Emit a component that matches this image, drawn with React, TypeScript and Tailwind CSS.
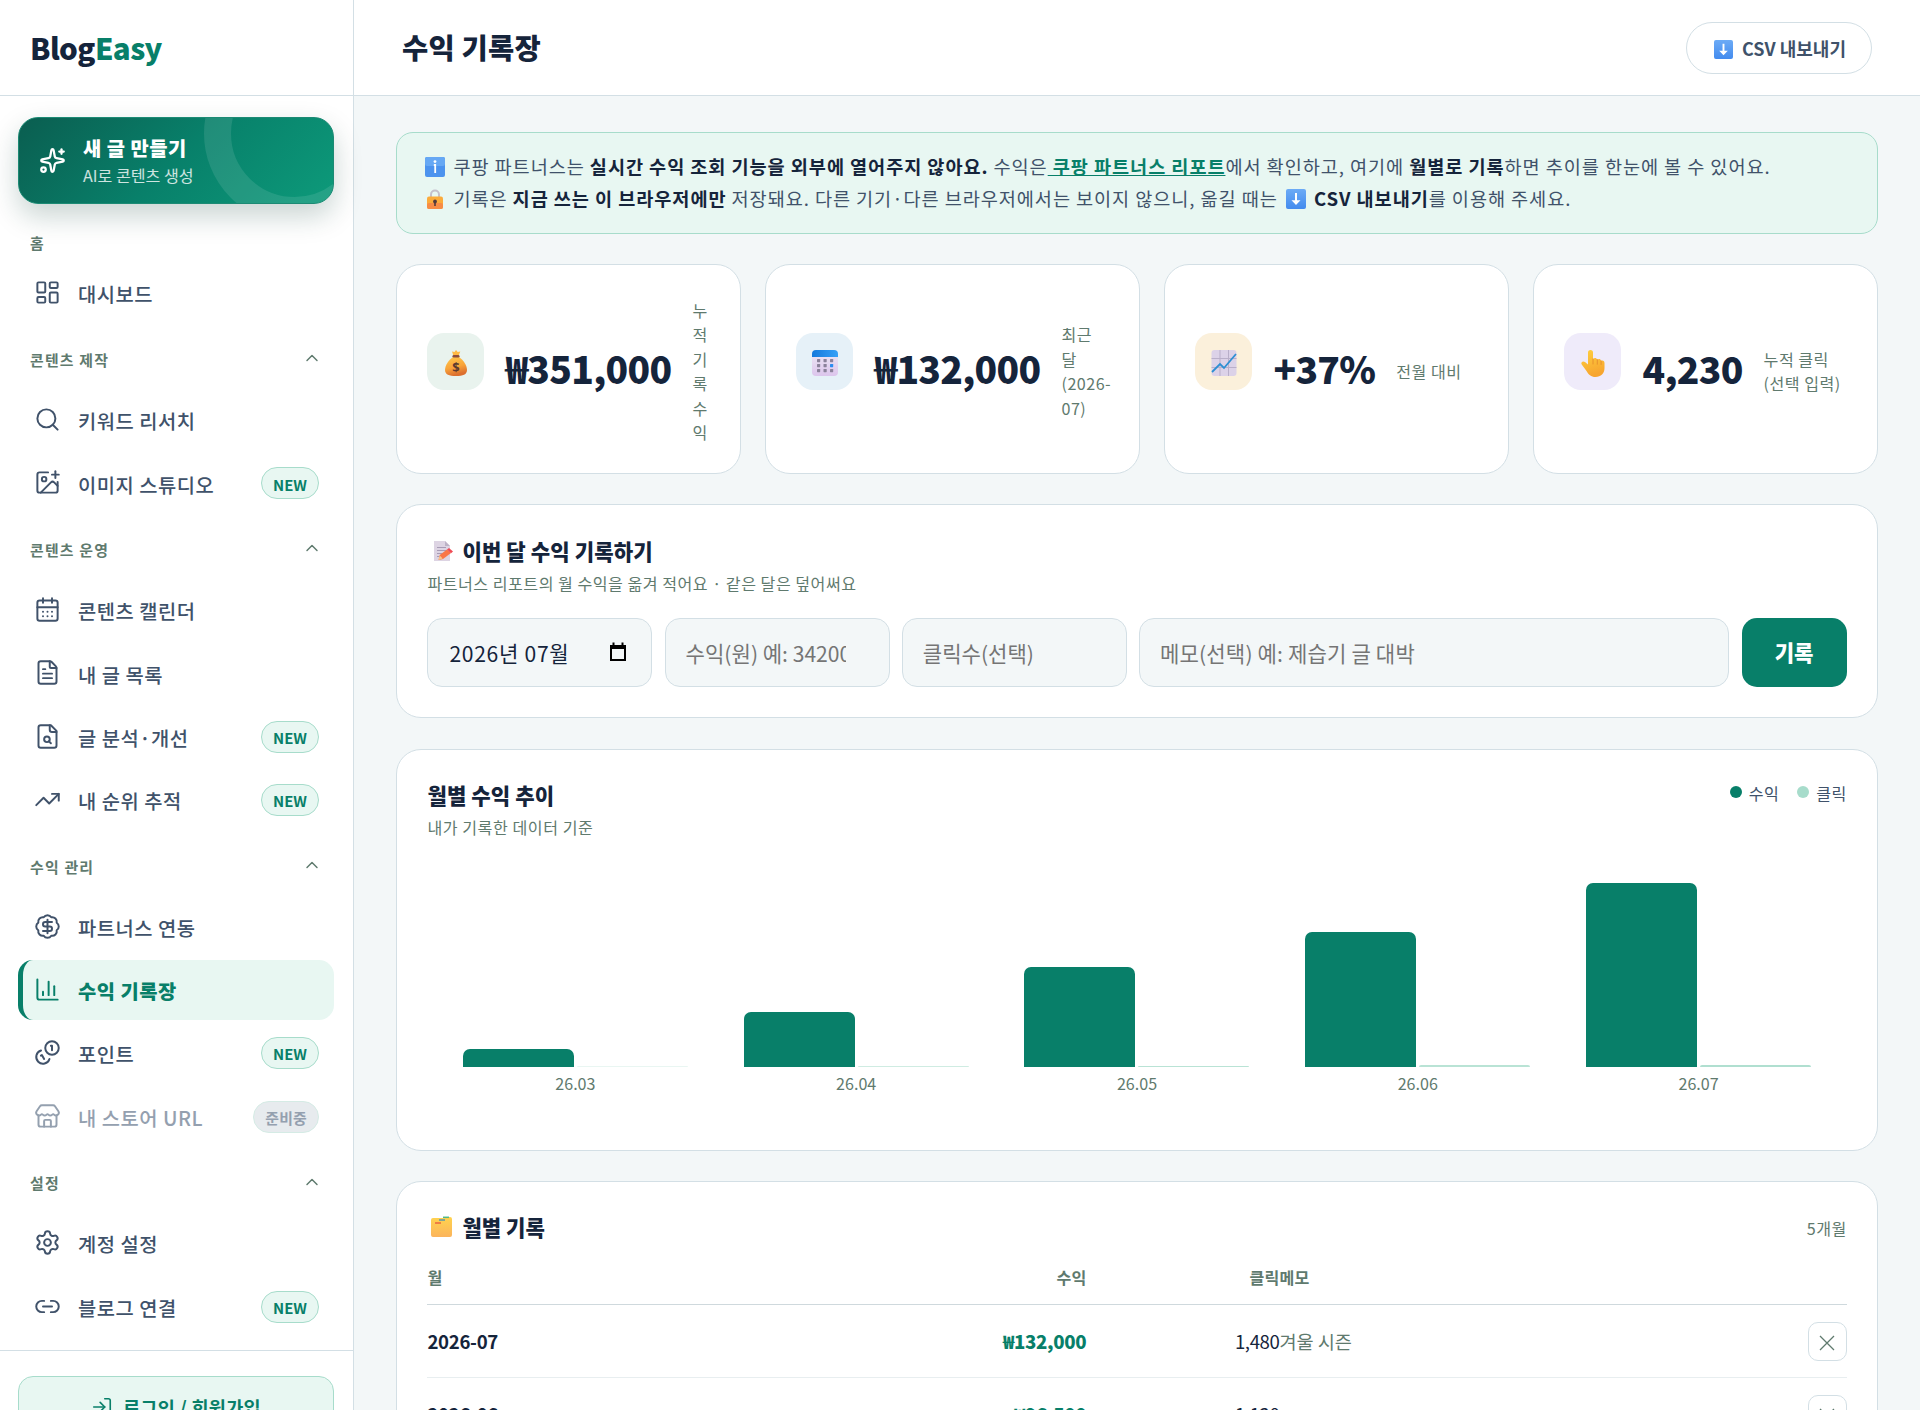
import type { ReactNode } from "react";
import {
  BadgeDollarSign,
  CalendarDays,
  ChartColumn,
  ChevronUp,
  FileText,
  ImagePlus,
  LayoutDashboard,
  Link2,
  LogIn,
  Search,
  Settings,
  Sparkles,
  Store,
  TrendingUp,
  type LucideIcon,
} from "lucide-react";

type IconType = LucideIcon | (() => ReactNode);

type NavItem = {
  label: string;
  icon: IconType;
  badge?: string;
  active?: boolean;
  disabled?: boolean;
};

const svgProps = {
  viewBox: "0 0 24 24",
  fill: "none",
  stroke: "currentColor",
  strokeWidth: 1.75,
  strokeLinecap: "round" as const,
  strokeLinejoin: "round" as const,
};

function FileSearchIcon() {
  return (
    <svg {...svgProps} className="size-[27px] shrink-0">
      <path d="M15 2H6a2 2 0 0 0-2 2v16a2 2 0 0 0 2 2h12a2 2 0 0 0 2-2V7Z" />
      <path d="M14 2v4a2 2 0 0 0 2 2h4" />
      <circle cx="11.5" cy="14.5" r="2.5" />
      <path d="M13.3 16.3 15 18" />
    </svg>
  );
}

function CoinsIcon() {
  return (
    <svg {...svgProps} className="size-[27px] shrink-0">
      <path d="M13.744 17.736a6 6 0 1 1-7.48-7.48" />
      <path d="M15 6h1v4" />
      <path d="m6.134 14.768.866-.5 2 3.464" />
      <circle cx="16" cy="8" r="6" />
    </svg>
  );
}

const sections: { title: string; items: NavItem[] }[] = [
  {
    title: "콘텐츠 제작",
    items: [
      { label: "키워드 리서치", icon: Search },
      { label: "이미지 스튜디오", icon: ImagePlus, badge: "NEW" },
    ],
  },
  {
    title: "콘텐츠 운영",
    items: [
      { label: "콘텐츠 캘린더", icon: CalendarDays },
      { label: "내 글 목록", icon: FileText },
      { label: "글 분석·개선", icon: FileSearchIcon, badge: "NEW" },
      { label: "내 순위 추적", icon: TrendingUp, badge: "NEW" },
    ],
  },
  {
    title: "수익 관리",
    items: [
      { label: "파트너스 연동", icon: BadgeDollarSign },
      { label: "수익 기록장", icon: ChartColumn, active: true },
      { label: "포인트", icon: CoinsIcon, badge: "NEW" },
      { label: "내 스토어 URL", icon: Store, badge: "준비중", disabled: true },
    ],
  },
  {
    title: "설정",
    items: [
      { label: "계정 설정", icon: Settings },
      { label: "블로그 연결", icon: Link2, badge: "NEW" },
    ],
  },
];

function NavRow({ label, icon: Icon, badge, active, disabled }: NavItem) {
  const base = "mb-[3.3px] flex h-[60px] items-center gap-[17px] rounded-[15px] border-l-[5px] pr-[15px] pl-[11px]";
  const tone = active
    ? "border-[#087f69] bg-[#e8f7f2] font-extrabold text-[#087f69]"
    : disabled
      ? "border-transparent text-[#94a0af] font-medium"
      : "border-transparent text-[#40526a] font-medium";
  return (
    <div className={`${base} ${tone}`}>
      <Icon className="size-[27px] shrink-0" strokeWidth={1.75} />
      <span className="grow pt-[3px] text-[19.84px] leading-none tracking-[0.5px]">{label}</span>
      {badge && !disabled && (
        <span className="mt-px flex h-8 items-center rounded-full border border-[#a7dccb] bg-[#e8f7f2] px-[11px] pt-[3px] text-[14.9px] leading-none font-bold text-[#087f69]">
          {badge}
        </span>
      )}
      {badge && disabled && (
        <span className="mt-px flex h-8 items-center rounded-full border border-[#d5ebe5] bg-[#e7ebee] px-[11px] pt-[3px] text-[14.9px] leading-none font-bold tracking-[0.2px] text-[#94a0af]">
          {badge}
        </span>
      )}
    </div>
  );
}

function Sidebar() {
  return (
    <aside className="flex w-[354px] shrink-0 flex-col border-r border-[#d3dfe5] bg-white">
      <div className="flex h-24 shrink-0 items-center border-b border-[#d3dfe5] pl-[30px] text-[29.5px] font-extrabold tracking-[-0.6px] text-[#15243b]">
        Blog<span className="text-[#087f69]">Easy</span>
      </div>
      <div className="flex h-[1254px] shrink-0 flex-col pt-[21px] pr-[19px] pl-[18px]">
        <div className="relative flex h-[87px] w-[316px] shrink-0 items-center rounded-[20px] border border-[#1c8a74] bg-linear-135 from-[#0a5e50] via-[#08806a] to-[#0d9a7a] pl-5 text-white shadow-[0_12px_28px_rgba(10,60,50,0.22)]">
          <div className="absolute inset-0 overflow-hidden rounded-[19px]">
            <div className="absolute -top-[75px] left-[185px] size-[181px] rounded-full border-[27px] border-white/10" />
          </div>
          <Sparkles className="size-[27px]" strokeWidth={2} />
          <div className="ml-[17px] flex flex-col">
            <span className="pt-px text-[19.84px] leading-7 font-extrabold tracking-[0.5px]">새 글 만들기</span>
            <span className="-mt-px text-[16.1px] leading-7 text-white/80">AI로 콘텐츠 생성</span>
          </div>
        </div>
        <div className="mt-[29px] h-[29px] pl-3 text-[14.9px] leading-5 font-bold tracking-[1.2px] text-[#5f7a6e]">홈</div>
        <NavRow label="대시보드" icon={LayoutDashboard} />
        <div className="pt-[1px]">
          {sections.map((s) => (
            <div key={s.title}>
              <div className="flex h-[63.4px] items-center justify-between pr-3 pl-3 text-[14.9px] leading-none font-bold tracking-[1.2px] text-[#5f7a6e]">
                <span className="pt-[5px]">{s.title}</span>
                <ChevronUp className="mt-px size-5" strokeWidth={1.75} />
              </div>
              {s.items.map((item) => (
                <NavRow key={item.label} {...item} />
              ))}
            </div>
          ))}
        </div>
      </div>
      <div className="border-t border-[#d3dfe5] px-[18px] pt-[25px]">
        <div className="flex h-[62px] w-[316px] items-center justify-center gap-[10px] rounded-[15px] border border-[#a7dccb] bg-[#e8f7f2] text-[18.6px] font-bold tracking-[0.25px] text-[#087f69]">
          <LogIn className="size-[22px]" strokeWidth={1.75} />
          로그인 / 회원가입
        </div>
      </div>
    </aside>
  );
}

function InfoEmoji({ className }: { className: string }) {
  return (
    <svg viewBox="0 0 20 20" className={className}>
      <rect width="20" height="20" rx="2" fill="#4c93ee" />
      <rect width="20" height="9" rx="2" fill="#66a8f4" />
      <circle cx="10" cy="4.6" r="1.4" fill="#fff" />
      <path d="M8.8 8H10.200V16" fill="none" stroke="#fff" strokeWidth="1.8" />
    </svg>
  );
}

function DownEmoji({ className }: { className: string }) {
  return (
    <svg viewBox="0 0 20 20" className={className}>
      <defs>
        <linearGradient id="down" x1="0" y1="0" x2="0" y2="1">
          <stop offset="0" stopColor="#6cabf6" />
          <stop offset="1" stopColor="#438bee" />
        </linearGradient>
      </defs>
      <rect width="20" height="20" rx="2" fill="url(#down)" />
      <path d="M9 4h2v7.200h3.500L10 16l-4.500-4.800H9z" fill="#fff" />
    </svg>
  );
}

function LockEmoji() {
  return (
    <svg viewBox="0 0 20 20" className="inline-block size-5 align-[-3px]">
      <path d="M6 9V5.500a4 4 0 0 1 8 0V9" fill="none" stroke="#c5c0cc" strokeWidth="2" />
      <rect x="2" y="7.500" width="16" height="12.500" rx="2" fill="#fbab3b" />
      <rect x="2" y="14" width="16" height="6" rx="2" fill="#f78c45" />
      <circle cx="10" cy="12.500" r="1.900" fill="#523a3b" />
      <path d="M9.200 13h1.600v4H9.200z" fill="#523a3b" />
    </svg>
  );
}

function MoneyBag() {
  return (
    <svg viewBox="0 0 26 28" className="h-7 w-[26px]">
      <defs>
        <linearGradient id="bag" x1="0" y1="0" x2="0.300" y2="1">
          <stop offset="0" stopColor="#ffc94b" />
          <stop offset="0.600" stopColor="#f9a43a" />
          <stop offset="1" stopColor="#dc6f2e" />
        </linearGradient>
      </defs>
      <path d="M9 2.500 11.500 3 13 1l1.700 2 2.600-.5L15.500 7h-5z" fill="#ffb944" />
      <path d="M10 8C6 11 2 16 2 21c0 4.500 4 6 11 6s11-1.500 11-6c0-5-4-10-8-13z" fill="url(#bag)" />
      <rect x="9.500" y="6" width="7" height="2.600" rx="1.300" fill="#8b4b3c" />
      <text x="13" y="23" textAnchor="middle" fontSize="13" fontWeight="700" fill="#5b3a30" fontFamily="Noto Sans">
        $
      </text>
    </svg>
  );
}

function CalendarEmoji() {
  return (
    <svg viewBox="0 0 26 26" className="size-[26px]">
      <defs>
        <linearGradient id="calTop" x1="0" y1="0" x2="1" y2="0">
          <stop offset="0" stopColor="#1479dc" />
          <stop offset="1" stopColor="#36a0f7" />
        </linearGradient>
        <linearGradient id="calBody" x1="0" y1="0" x2="0" y2="1">
          <stop offset="0" stopColor="#eeeaf5" />
          <stop offset="1" stopColor="#dcc5ec" />
        </linearGradient>
      </defs>
      <rect width="26" height="26" rx="4" fill="url(#calBody)" />
      <path d="M0 7V4a4 4 0 0 1 4-4h18a4 4 0 0 1 4 4v3z" fill="url(#calTop)" />
      {[9, 14, 19].map((y) =>
        [5, 11.5, 18].map((x) => (
          <rect key={`${x}-${y}`} x={x} y={y} width="3.200" height="3.200" rx="0.600" fill={x === 18 && y === 14 ? "#2b8cf0" : "#8b829b"} />
        )),
      )}
    </svg>
  );
}

function ChartEmoji() {
  return (
    <svg viewBox="0 0 26 26" className="size-[26px]">
      <rect x="0.500" width="25" height="26" rx="3" fill="#dcd2e8" />
      <path d="M0.500 8.500h25M0.500 17.500h25M9 0v26M17.500 0v26" stroke="#b9afc9" strokeWidth="1" />
      <path d="m1 22 8-8 4 4L25 4" fill="none" stroke="#2d8fd3" strokeWidth="1.800" />
    </svg>
  );
}

function HandEmoji() {
  return (
    <svg viewBox="0 0 26 27" className="h-[27px] w-[26px]">
      <defs>
        <linearGradient id="hand" x1="0" y1="0" x2="0.300" y2="1">
          <stop offset="0" stopColor="#ffd03f" />
          <stop offset="1" stopColor="#f7a52f" />
        </linearGradient>
      </defs>
      <path
        d="M8 2.500a2.500 2.500 0 0 1 5 0V9c1.500-1.500 3.500-1.200 4.300.6 1.600-1.200 3.300-.7 3.800 1.200 2-.8 3.400.3 3.400 2.400V18c0 5.500-3.500 9-9 9-4.500 0-7-2.500-9-6l-4.800-6.500C.3 12.200 3 10.500 5 12l3 2.500z"
        fill="url(#hand)"
      />
      <path d="M13 9v5M17.300 9.600v4.600M21.100 11v3.500" stroke="#e58d2c" strokeWidth="0.900" strokeLinecap="round" />
    </svg>
  );
}

function MemoEmoji() {
  return (
    <svg viewBox="0 0 22 22" className="size-[22px]">
      <path d="M2 1h11l5 5v15H2z" fill="#ddd4e3" />
      <path d="M13 1l5 5h-5z" fill="#bcb2c6" />
      <path d="M5 7.500h9M5 10.500h9M5 13.500h6M5 16.500h3" stroke="#a79bb5" strokeWidth="1" />
      <path d="m6.500 20 1.200-5L15 9.500l4 3.500-8 6z" fill="#f97648" />
      <path d="m15 9.500 2-1.500 4 3.600-2 1.600z" fill="#ef4a55" />
      <path d="m6.500 20 1.200-4.500 3 3z" fill="#f8c58c" />
    </svg>
  );
}

function FolderEmoji() {
  return (
    <svg viewBox="0 0 22 22" className="size-[22px]">
      <defs>
        <linearGradient id="folder" x1="0" y1="0" x2="0" y2="1">
          <stop offset="0" stopColor="#ffd34e" />
          <stop offset="1" stopColor="#fbb45c" />
        </linearGradient>
      </defs>
      <path d="M0 4a2 2 0 0 1 2-2h10l2-1h5a2 2 0 0 1 2 2v16a2 2 0 0 1-2 2H2a2 2 0 0 1-2-2z" fill="url(#folder)" />
      <path d="M12 1.300h6" stroke="#52b788" strokeWidth="1.500" />
      <path d="M8 4h6" stroke="#3d8fb8" strokeWidth="1.300" />
      <path d="M4 7h6" stroke="#e7553c" strokeWidth="1.300" />
    </svg>
  );
}

const stats = [
  { value: "₩351,000", label: "누적 기록 수익", icon: <MoneyBag />, box: "bg-[#e9f3ee]", text: "w-[17px] break-all" },
  { value: "₩132,000", label: "최근 달 (2026-07)", icon: <CalendarEmoji />, box: "bg-[#e6f1f8]", text: "w-[49px]" },
  { value: "+37%", label: "전월 대비", icon: <ChartEmoji />, box: "bg-[#fbf0db]", text: "" },
  { value: "4,230", label: "누적 클릭 (선택 입력)", icon: <HandEmoji />, box: "bg-[#efebfa]", text: "w-[82px]" },
];

// revenue / click bar heights in px
const months = [
  { label: "26.03", revenue: 18, clicks: 1, fade: 0.25 },
  { label: "26.04", revenue: 55, clicks: 1, fade: 0.55 },
  { label: "26.05", revenue: 99.6, clicks: 1.4, fade: 0.8 },
  { label: "26.06", revenue: 134.6, clicks: 1.6, fade: 0.8 },
  { label: "26.07", revenue: 184, clicks: 2.1, fade: 0.9 },
];

const records = [
  { month: "2026-07", revenue: "₩132,000", clicks: "1,480", memo: "겨울 시즌" },
  { month: "2026-06", revenue: "₩96,500", clicks: "1,120", memo: "" },
];

const card = "rounded-[25px] border border-[#d3dfe5] bg-white";
const field =
  "flex h-[69px] items-center overflow-hidden rounded-[15px] border border-[#d3dfe5] bg-[#f3f7f8] px-5 pt-[2px] text-[21.08px] whitespace-nowrap text-[#757575]";

export default function App() {
  return (
    <div className="flex h-[1410px] w-[1920px] overflow-hidden bg-[#f3f7f8] font-['Noto_Sans_CJK_KR','Noto_Sans',sans-serif] text-[#15243b]">
      <Sidebar />
      <div className="flex min-w-0 grow flex-col">
        <header className="flex h-24 shrink-0 items-center justify-between border-b border-[#d3dfe5] bg-white px-12">
          <h1 className="text-[28.5px] font-extrabold tracking-[0.2px]">수익 기록장</h1>
          <button className="flex h-[52px] w-[186px] items-center justify-center gap-[9px] rounded-full border border-[#d3dfe5] pt-[2px] pl-[2px] text-[18px] font-bold text-[#40526a]">
            <DownEmoji className="mt-px size-[19px]" />
            CSV 내보내기
          </button>
        </header>

        <main className="flex flex-col px-[42.4px] pt-9">
          <div className="h-[102px] rounded-[17px] border border-[#a7dccb] bg-[#e8f7f2] pt-[17px] pl-7 text-[18.6px] leading-8 tracking-[0.93px] text-[#40526a]">
            <p>
              <InfoEmoji className="mr-2 inline-block size-5 align-[-3px]" />
              쿠팡 파트너스는 <b className="text-[#15243b]">실시간 수익 조회 기능을 외부에 열어주지 않아요.</b> 수익은
              <a className="font-bold text-[#087f69] underline"> 쿠팡 파트너스 리포트</a>에서 확인하고, 여기에{" "}
              <b className="text-[#15243b]">월별로 기록</b>하면 추이를 한눈에 볼 수 있어요.
            </p>
            <p>
              <LockEmoji />
              <span className="ml-2">기록은 </span>
              <b className="text-[#15243b]">지금 쓰는 이 브라우저에만</b> 저장돼요. 다른 기기·다른 브라우저에서는 보이지 않으니, 옮길 때는{" "}
              <DownEmoji className="mr-2 ml-[3px] inline-block size-5 align-[-3px]" />
              <b className="text-[#15243b]">CSV 내보내기</b>를 이용해 주세요.
            </p>
          </div>

          <div className="mt-[30px] grid grid-cols-[344.4px_374.3px_344.3px_344.3px] gap-[24.7px]">
            {stats.map((s) => (
              <div key={s.value} className={`${card} flex h-[210px] items-center pl-[30px]`}>
                <div className={`${s.box} mb-[15px] flex size-[57px] shrink-0 items-center justify-center rounded-[17px]`}>
                  <span className="pt-[3px]">{s.icon}</span>
                </div>
                <span className="ml-[21px] text-[37.2px] leading-none font-extrabold tracking-[-0.7px]">{s.value}</span>
                <span className={`${s.text} mt-1 ml-[21px] text-[16.1px] leading-[24.5px] tracking-[0.5px] text-[#5f7a6e]`}>{s.label}</span>
              </div>
            ))}
          </div>

          <section className={`${card} mt-[30px] h-[214px] px-[30px] pt-8`}>
            <h2 className="flex items-center gap-2 text-[21.1px] leading-7 font-extrabold tracking-[0.1px]">
              <span className="ml-[5px]">
                <MemoEmoji />
              </span>
              이번 달 수익 기록하기
            </h2>
            <p className="mt-[6px] text-[16.1px] leading-6 tracking-[0.5px] text-[#5f7a6e]">
              파트너스 리포트의 월 수익을 옮겨 적어요 · 같은 달은 덮어써요
            </p>
            <div className="mt-[23px] grid grid-cols-[225px_225px_225px_1fr_105px] gap-[12.2px]">
              <div className={`${field} justify-between`}>
                <span className="pl-px tracking-[0.7px] text-[#15243b]">2026년 07월</span>
                <svg viewBox="0 0 18 20" className="mr-1 mb-1 h-5 w-[18px]">
                  <path d="M2 4.500h14V18H2z" fill="none" stroke="#000" strokeWidth="2" />
                  <path d="M1 3h16v4H1zM3.500 0.500h2V4h-2zM12.500 0.500h2V4h-2z" fill="#000" />
                </svg>
              </div>
              <div className={field}>
                <span className="w-[160px] overflow-hidden">수익(원) 예: 34200</span>
              </div>
              <div className={field}>클릭수(선택)</div>
              <div className={`${field} tracking-[0.15px]`}>메모(선택) 예: 제습기 글 대박</div>
              <button className="h-[69px] rounded-[15px] bg-[#087f69] pt-px text-[21.08px] font-extrabold text-white">기록</button>
            </div>
          </section>

          <section className={`${card} mt-[31px] h-[402px] px-[30px] pt-[31px]`}>
            <div className="flex justify-between">
              <div>
                <h2 className="text-[21.1px] leading-7 font-extrabold tracking-[0.1px]">월별 수익 추이</h2>
                <p className="mt-[6px] text-[16.1px] leading-6 tracking-[0.55px] text-[#5f7a6e]">내가 기록한 데이터 기준</p>
              </div>
              <div className="flex h-6 items-center gap-[18px] text-[16.1px] tracking-[0.4px] text-[#40526a]">
                <span className="flex items-center gap-[7px]">
                  <i className="mb-[2px] size-3 rounded-full bg-[#087f69]" />
                  수익
                </span>
                <span className="flex items-center gap-[7px]">
                  <i className="mb-[2px] size-3 rounded-full bg-[#a7dccb]" />
                  클릭
                </span>
              </div>
            </div>
            <div className="mt-[18px] flex h-[210px] gap-[55.8px] px-[35.5px]">
              {months.map((m) => (
                <div key={m.label} className="flex w-[225px] shrink-0 items-end gap-[3px]">
                  <div className="flex-1 rounded-t-[7px] bg-[#087f69]" style={{ height: m.revenue }} />
                  <div className="flex-1 rounded-t-[7px] bg-[#a7dccb]" style={{ height: m.clicks, opacity: m.fade }} />
                </div>
              ))}
            </div>
            <div className="mt-1 flex gap-[55.8px] px-[35.5px]">
              {months.map((m) => (
                <span key={m.label} className="w-[225px] shrink-0 text-center text-[16.1px] leading-6 text-[#5f7a6e]">
                  {m.label}
                </span>
              ))}
            </div>
          </section>

          <section className={`${card} mt-[30px] h-[560px] shrink-0 px-[30px] pt-[31px]`}>
            <div className="flex items-center justify-between">
              <h2 className="flex items-center gap-[9px] text-[21.1px] leading-7 font-extrabold">
                <span className="ml-1">
                  <FolderEmoji />
                </span>
                월별 기록
              </h2>
              <span className="pt-[2px] text-[16.1px] tracking-[0.4px] text-[#5f7a6e]">5개월</span>
            </div>
            <div className="mt-3 grid h-[52px] grid-cols-[465px_194px_193px_1fr] items-center border-b border-[#cfd9dd] pb-[3px] text-[16.1px] font-bold tracking-[0.2px] text-[#5f7a6e]">
              <span>월</span>
              <span className="text-right">수익</span>
              <span className="text-right">클릭</span>
              <span>메모</span>
            </div>
            {records.map((r) => (
              <div key={r.month} className="grid h-[73.3px] grid-cols-[465px_194px_193px_1fr_39px] items-center border-b border-[#e8eef0] text-[18.6px] leading-6">
                <span className="font-bold tracking-[-0.3px]">{r.month}</span>
                <span className="text-right font-extrabold tracking-[-0.3px] text-[#087f69]">{r.revenue}</span>
                <span className="text-right tracking-[-0.4px]">{r.clicks}</span>
                <span className="text-[#5f7a6e]">{r.memo}</span>
                <button className="flex size-[39px] items-center justify-center rounded-[10px] border border-[#d3dfe5] text-[#5f7a6e]">
                  <svg viewBox="0 0 16 16" className="mt-1 size-4" stroke="currentColor" strokeWidth="1.300">
                    <path d="M1 1l14 14M15 1 1 15" />
                  </svg>
                </button>
              </div>
            ))}
          </section>
        </main>
      </div>
    </div>
  );
}
